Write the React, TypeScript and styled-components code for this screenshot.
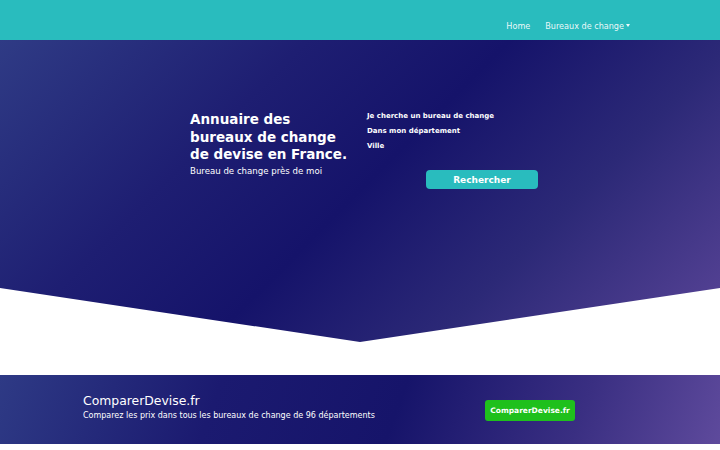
import React, { FC } from 'react';
import styled, { createGlobalStyle } from 'styled-components';

const GlobalStyle = createGlobalStyle`
	html, body {
		margin: 0;
		padding: 0;
		background: #ffffff;
		font-family: 'DejaVu Sans', 'Noto Sans', sans-serif;
	}
	* {
		box-sizing: border-box;
	}
`;

const Navbar = styled.nav`
	height: 40px;
	background: #29bcbe;
	display: flex;
	align-items: center;
	justify-content: flex-end;
	padding: 12px 90px 0 0;
	gap: 15px;
`;

const NavLink = styled.a`
	color: rgba(255, 255, 255, 0.92);
	font-size: 8.1px;
	text-decoration: none;
	display: flex;
	align-items: center;
	gap: 2px;
`;

const Caret = styled.span`
	display: inline-block;
	width: 0;
	height: 0;
	border-left: 2.5px solid transparent;
	border-right: 2.5px solid transparent;
	border-top: 3px solid rgba(255, 255, 255, 0.92);
	margin-top: -2px;
`;

const Hero = styled.section`
	height: 302px;
	background: linear-gradient(135deg, #2f3b85 0%, #1e1e72 30%, #15136a 50%, #2c2977 72%, #5a4598 100%);
	clip-path: polygon(0 0, 100% 0, 100% 248px, 50% 100%, 0 248px);
	display: flex;
	justify-content: center;
	padding-top: 71px;
	padding-left: 8px;
	gap: 13px;
`;

const Intro = styled.div`
	width: 164px;
	color: #ffffff;
`;

const Title = styled.h1`
	margin: 0;
	font-size: 13.5px;
	line-height: 17.5px;
	font-weight: bold;
`;

const Subtitle = styled.p`
	margin: 1px 0 0;
	font-size: 8.6px;
	line-height: 12px;
`;

const SearchForm = styled.form`
	width: 171px;
	display: flex;
	flex-direction: column;
	margin-top: -2px;
`;

const FieldLabel = styled.label`
	color: #ffffff;
	font-size: 7px;
	font-weight: bold;
	line-height: 15px;
`;

const SearchButton = styled.button`
	align-self: flex-end;
	margin-top: 16px;
	width: 112px;
	height: 19px;
	border: none;
	border-radius: 4px;
	background: #29bcbe;
	color: #ffffff;
	font-family: inherit;
	font-weight: bold;
	font-size: 9px;
	cursor: pointer;
`;

const Spacer = styled.div`
	height: 33px;
`;

const Banner = styled.footer`
	height: 69px;
	background: linear-gradient(110deg, #2e3a85 0%, #1b1a70 30%, #16146a 55%, #3a2f82 80%, #5e4a9c 100%);
	display: flex;
	align-items: center;
	justify-content: space-between;
	padding: 0 145px 6px 83px;
`;

const BannerText = styled.div`
	color: #ffffff;
`;

const BannerTitle = styled.h2`
	margin: 0;
	font-size: 12.4px;
	font-weight: normal;
	line-height: 18px;
`;

const BannerSub = styled.p`
	margin: 0;
	font-size: 8px;
	line-height: 12px;
`;

const GreenButton = styled.a`
	display: flex;
	align-items: center;
	justify-content: center;
	width: 90px;
	height: 21px;
	border-radius: 3px;
	background: #1fc01c;
	color: #ffffff;
	font-size: 7.5px;
	font-weight: bold;
	text-decoration: none;
	margin-top: 8px;
`;

const App: FC = () => {
  return (
		<>
			<GlobalStyle />
			<Navbar>
				<NavLink href='#'>Home</NavLink>
				<NavLink href='#'>Bureaux de change <Caret /></NavLink>
			</Navbar>
			<Hero>
				<Intro>
					<Title>Annuaire des bureaux de change de devise en France.</Title>
					<Subtitle>Bureau de change près de moi</Subtitle>
				</Intro>
				<SearchForm onSubmit={(e) => e.preventDefault()}>
					<FieldLabel>Je cherche un bureau de change</FieldLabel>
					<FieldLabel>Dans mon département</FieldLabel>
					<FieldLabel>Ville</FieldLabel>
					<SearchButton type='submit'>Rechercher</SearchButton>
				</SearchForm>
			</Hero>
			<Spacer />
			<Banner>
				<BannerText>
					<BannerTitle>ComparerDevise.fr</BannerTitle>
					<BannerSub>Comparez les prix dans tous les bureaux de change de 96 départements</BannerSub>
				</BannerText>
				<GreenButton href='#'>ComparerDevise.fr</GreenButton>
			</Banner>
		</>
  );
};

export default App;
